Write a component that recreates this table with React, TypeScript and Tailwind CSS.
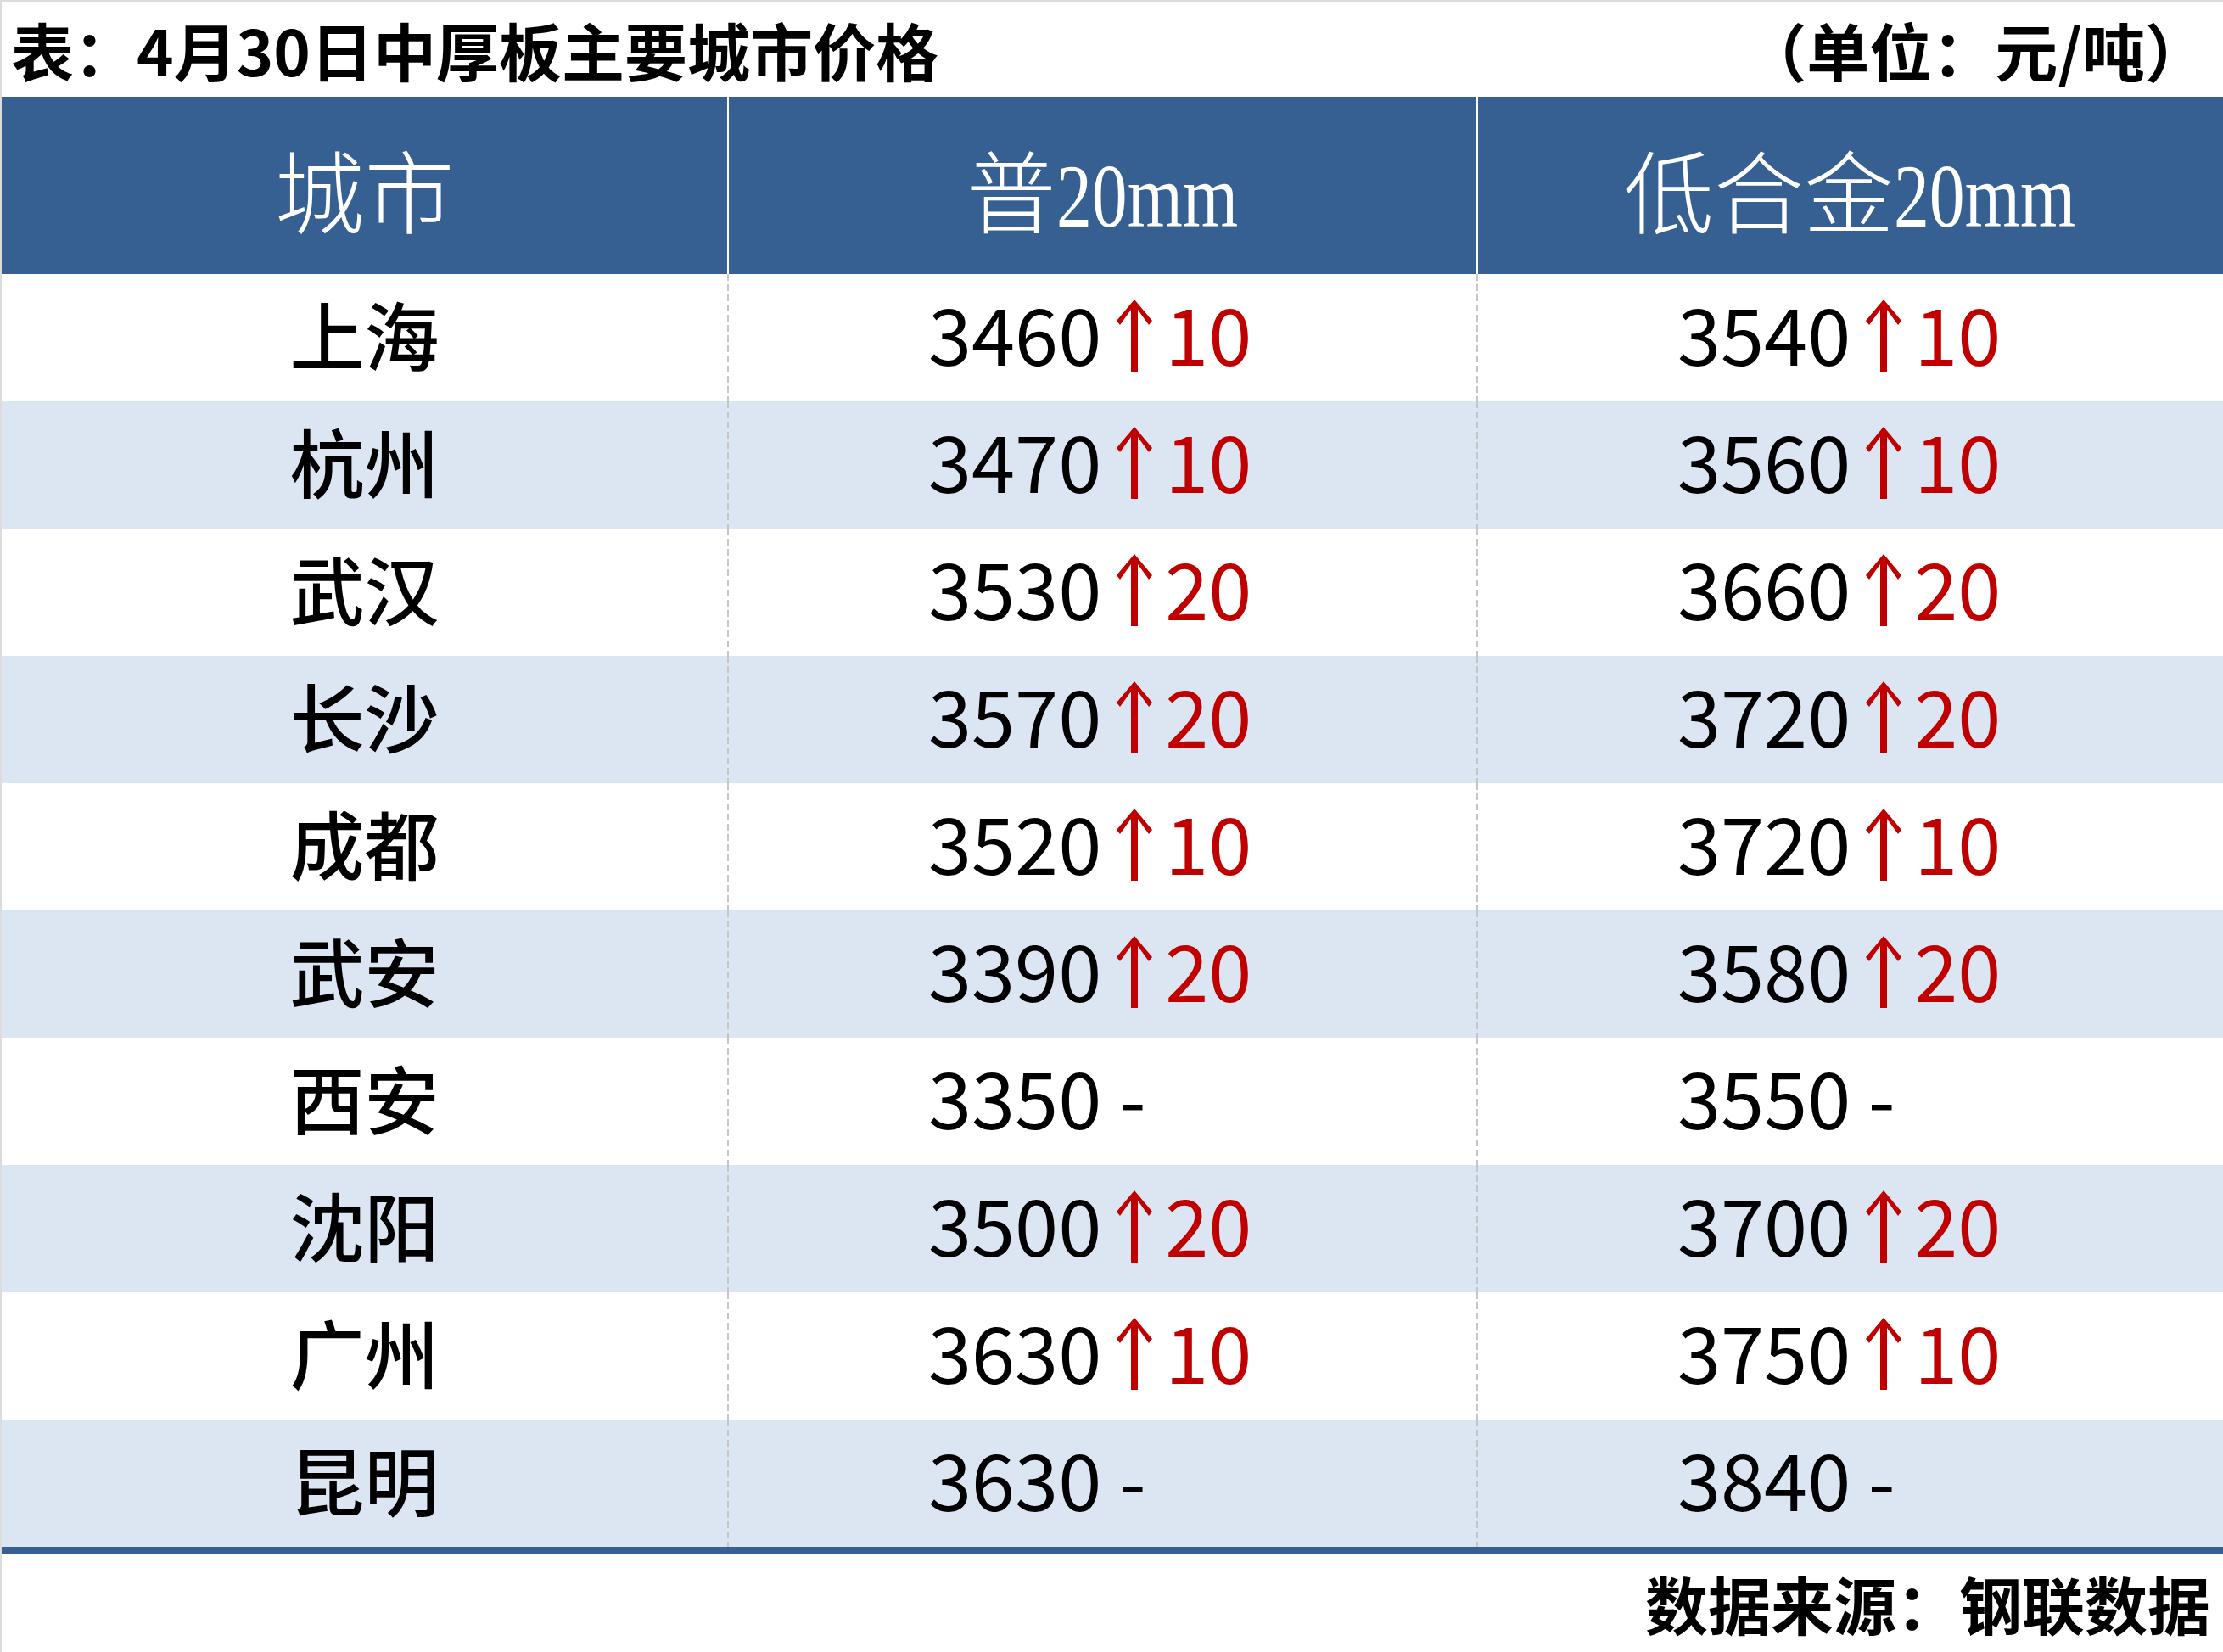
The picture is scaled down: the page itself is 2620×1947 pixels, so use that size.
import React from "react";

type Price = { value: number; change: number | null };
type Row = { city: string; plain: Price; alloy: Price };

const rows: Row[] = [
  { city: "上海", plain: { value: 3460, change: 10 }, alloy: { value: 3540, change: 10 } },
  { city: "杭州", plain: { value: 3470, change: 10 }, alloy: { value: 3560, change: 10 } },
  { city: "武汉", plain: { value: 3530, change: 20 }, alloy: { value: 3660, change: 20 } },
  { city: "长沙", plain: { value: 3570, change: 20 }, alloy: { value: 3720, change: 20 } },
  { city: "成都", plain: { value: 3520, change: 10 }, alloy: { value: 3720, change: 10 } },
  { city: "武安", plain: { value: 3390, change: 20 }, alloy: { value: 3580, change: 20 } },
  { city: "西安", plain: { value: 3350, change: null }, alloy: { value: 3550, change: null } },
  { city: "沈阳", plain: { value: 3500, change: 20 }, alloy: { value: 3700, change: 20 } },
  { city: "广州", plain: { value: 3630, change: 10 }, alloy: { value: 3750, change: 10 } },
  { city: "昆明", plain: { value: 3630, change: null }, alloy: { value: 3840, change: null } },
];

const SANS = "font-['Noto_Sans_CJK_SC','Noto_Sans',sans-serif]";
const SERIF = "font-['Liberation_Serif','Noto_Sans_CJK_SC',serif]";

function UpArrow() {
  return (
    <svg width="42" height="85" viewBox="0 0 42 85" className="ml-[18px] mr-[15px] mt-[8px] shrink-0" aria-hidden>
      <polygon
        points="21,0 42,25 38,30 25,12 25,85 17,85 17,12 4,30 0,25"
        fill="#c00000"
      />
    </svg>
  );
}

function PriceCell({ p }: { p: Price }) {
  return (
    <div className="flex h-full items-center pl-[237px] pb-[14px] text-[92px] leading-none text-black bg-[linear-gradient(#c6c6c6_8px,transparent_8px)] bg-[length:2px_12px] bg-repeat-y bg-left-top">
      <span>{p.value}</span>
      {p.change === null ? (
        <span className="whitespace-pre"> -</span>
      ) : (
        <>
          <UpArrow />
          <span className="text-[#c00000]">{p.change}</span>
        </>
      )}
    </div>
  );
}

function HeadLatin({ text }: { text: string }) {
  // the header numerals are a squeezed serif
  return (
    <span className="inline-block w-[216px] text-left">
      <span className="inline-block origin-left scale-x-[0.79] whitespace-nowrap">{text}</span>
    </span>
  );
}

export default function App() {
  return (
    <div className={`w-[2620px] h-[1947px] bg-white border-t-2 border-l-2 border-[#dcdcdc] overflow-hidden ${SANS}`}>
      <div className="flex h-[112px] items-center justify-between pl-[11px] pr-[18px] text-[74px] font-bold leading-none text-black">
        <span>表：4月30日中厚板主要城市价格</span>
        <span>（单位：元/吨）</span>
      </div>

      <div className={`grid h-[209px] grid-cols-[855px_883px_1fr] bg-[#366092] text-white text-[106px] leading-none font-[300] ${SERIF}`}>
        <div className="flex items-center justify-center pt-[26px]">城市</div>
        <div className="flex items-center justify-center border-l-2 border-white pt-[26px]">
          <span>普</span>
          <HeadLatin text="20mm" />
        </div>
        <div className="flex items-center justify-center border-l-2 border-white pt-[26px]">
          <span>低合金</span>
          <HeadLatin text="20mm" />
        </div>
      </div>

      <div className="flex flex-col">
        {rows.map((r, i) => (
          <div
            key={r.city}
            className={`grid h-[150px] grid-cols-[855px_883px_1fr] ${i % 2 === 1 ? "bg-[#dce6f2]" : "bg-white"}`}
          >
            <div className="flex items-center justify-center pb-[12px] text-[88px] font-medium leading-none text-black">
              {r.city}
            </div>
            <PriceCell p={r.plain} />
            <PriceCell p={r.alloy} />
          </div>
        ))}
      </div>

      <div className="h-[8px] bg-[#366092]" />

      <div className="flex h-[116px] items-center justify-end pr-[15px] text-[74px] font-bold leading-none text-black">
        数据来源：钢联数据
      </div>
    </div>
  );
}
